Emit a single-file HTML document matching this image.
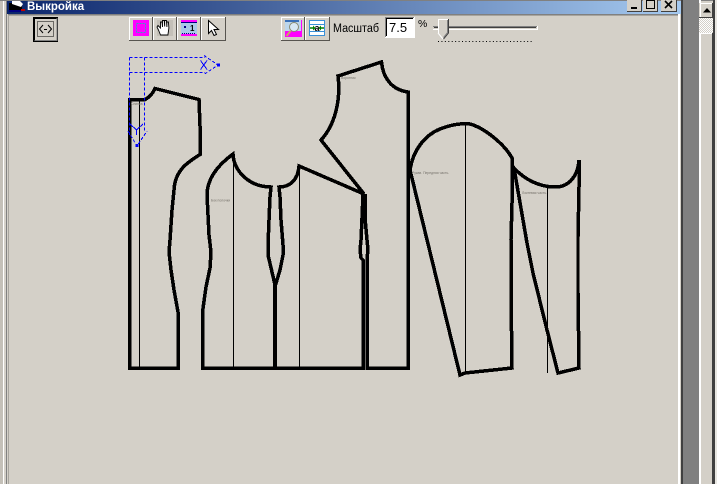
<!DOCTYPE html>
<html><head><meta charset="utf-8">
<style>
html,body{margin:0;padding:0;background:#d4d0c8;}
body{width:717px;height:484px;overflow:hidden;position:relative;}
svg{position:absolute;left:0;top:0;}
text{font-family:"Liberation Sans",sans-serif;}
.p{fill:none;stroke:#000;stroke-width:3.5;stroke-linejoin:miter;}
.t{fill:none;stroke:#000;stroke-width:1;}
.b{fill:none;stroke:#0000ff;stroke-width:1;stroke-dasharray:3 2;}
.s{font-size:3.4px;fill:#77736c;}
</style></head>
<body>
<svg width="717" height="484" viewBox="0 0 717 484" xmlns="http://www.w3.org/2000/svg">
<defs>
<linearGradient id="g" x1="0" x2="1" y1="0" y2="0"><stop offset="0" stop-color="#0a246a"/><stop offset="1" stop-color="#a6caf0"/></linearGradient>
<pattern id="d" width="2" height="2" patternUnits="userSpaceOnUse"><rect width="2" height="2" fill="#fff"/><rect width="1" height="1" fill="#d4d0c8"/><rect x="1" y="1" width="1" height="1" fill="#d4d0c8"/></pattern>
</defs>
<rect width="717" height="484" fill="#d4d0c8"/>
<!-- frame -->
<rect x="0" y="0" width="717" height="1" fill="#808080"/>
<rect x="0" y="1" width="3" height="483" fill="#c4c0b8"/>
<rect x="3" y="1" width="1" height="483" fill="#fff"/>
<rect x="6" y="1" width="1" height="483" fill="#808080"/>
<rect x="7" y="1" width="674" height="13" fill="url(#g)"/>
<rect x="8" y="14" width="670" height="1" fill="#808080"/>
<rect x="8" y="15" width="670" height="1" fill="#a8a59e"/>
<rect x="8" y="15" width="1" height="469" fill="#a8a59e"/>
<rect x="678" y="14" width="2" height="470" fill="#fff"/>
<rect x="681" y="0" width="2" height="484" fill="#404040"/>
<rect x="683" y="0" width="16" height="484" fill="#808080"/>
<rect x="699" y="0" width="2" height="484" fill="#fff"/>
<rect x="713" y="0" width="2" height="484" fill="#404040"/>
<rect x="715" y="0" width="2" height="484" fill="#e8e6e1"/>
<!-- scrollbar -->
<rect x="699" y="3" width="14" height="15" fill="#d4d0c8"/>
<path d="M699 17.5H712.5V3" fill="none" stroke="#404040"/>
<path d="M700.5 17V3.5H712" fill="none" stroke="#fff"/>
<path d="M703 12.5h8l-4-4.5z" fill="#000"/>
<rect x="699" y="18" width="14" height="15" fill="url(#d)"/>
<rect x="701" y="34" width="12" height="450" fill="#d4d0c8"/>
<rect x="700" y="33" width="12" height="1" fill="#fff"/>
<rect x="712" y="33" width="1" height="451" fill="#404040"/>
<!-- title -->
<g>
<path d="M9 3h10l3 3v4l-3 1H9z" fill="#000"/>
<path d="M12 1h8l3 3-2 3-9-3z" fill="#fff"/>
<rect x="21" y="9" width="4" height="2" fill="#c00000"/>
<rect x="9" y="10" width="12" height="2" fill="#000080"/>
<text x="27" y="10" font-size="11.500" font-weight="bold" fill="#fff">Выкройка</text>
</g>
<g>
<rect x="627" y="0" width="15" height="12" fill="#d4d0c8"/><path d="M627 11.500H641.500V0" fill="none" stroke="#404040"/>
<rect x="631" y="7" width="6" height="2" fill="#000"/>
<rect x="643" y="0" width="15" height="12" fill="#d4d0c8"/><path d="M643 11.500H657.500V0" fill="none" stroke="#404040"/>
<rect x="646.500" y="0.500" width="8" height="8" fill="none" stroke="#000"/>
<rect x="661" y="0" width="16" height="12" fill="#d4d0c8"/><path d="M661 11.500H676.500V0" fill="none" stroke="#404040"/>
<path d="M665 1l7 7M672 1l-7 7" stroke="#000" stroke-width="1.600"/>
</g>
<!-- pressed button -->
<rect x="33.500" y="17.500" width="24" height="24" fill="#d4d0c8" stroke="#000"/>
<path d="M34.500 41V18.500H57" fill="none" stroke="#000" stroke-width="1"/>
<path d="M34.500 40.500H57V18" fill="none" stroke="#808080"/>
<rect x="37.500" y="21.500" width="16" height="15" fill="none" stroke="#000" stroke-dasharray="1 1"/>
<path d="M43 25l-3.500 4 3.500 4M48 25l3.500 4-3.500 4" fill="none" stroke="#000"/>
<rect x="44" y="29" width="3" height="1" fill="#000"/>
<!-- toolbar 1 -->
<g id="btns" fill="#d4d0c8">
<rect x="129" y="17" width="24" height="24"/><rect x="153" y="17" width="24" height="24"/><rect x="177" y="17" width="24" height="24"/><rect x="201" y="17" width="25" height="24"/>
<rect x="281" y="17" width="24" height="24"/><rect x="305" y="17" width="25" height="24"/>
</g>
<g fill="none">
<path d="M129 40.500H152.500V17M153 40.500H176.500V17M177 40.500H200.500V17M201 40.500H225.500V17M281 40.500H304.500V17M305 40.500H329.500V17" stroke="#57544f"/>
<path d="M129.500 40V17.500H152M153.500 40V17.500H176M177.500 40V17.500H200M201.500 40V17.500H225M281.500 40V17.500H304M305.500 40V17.500H329" stroke="#fff"/>
</g>
<rect x="133" y="20" width="16" height="16" fill="#ff00ff"/>
<rect x="136.500" y="23.500" width="9" height="9" fill="none" stroke="#3aa0c0" stroke-dasharray="2 1"/>
<!-- hand -->
<rect x="157" y="20" width="16" height="16" fill="#c4c0b8"/>
<path d="M160.500 35l-2-5-1.500-3 1-1.500 2.500 2.500v-6h1.500l.5 5v-6.500h1.700l.5 6v-6h1.700l.5 6.500v-5h1.500l.5 6-1 7z" fill="#fff" stroke="#000" stroke-width=".9"/>
<!-- ruler -->
<rect x="181" y="20" width="16" height="16" fill="#a9c8e8"/>
<rect x="181" y="20" width="16" height="2" fill="#ff00ff"/><rect x="181" y="22" width="16" height="1" fill="#000080"/>
<rect x="181" y="34" width="16" height="2" fill="#ff00ff"/>
<path d="M182 33.500h14" stroke="#000080" stroke-dasharray="1 1"/>
<rect x="184" y="26" width="2" height="2" fill="#000080"/>
<text x="190" y="31" font-size="8" font-weight="bold" fill="#000">1</text>
<!-- arrow -->
<path d="M208.500 20.500v13l3-3 2.500 5 2.500-1-2.500-5h4.500z" fill="#fff" stroke="#000"/>
<!-- zoom icon -->
<rect x="285" y="20" width="17" height="17" fill="#ff00ff"/>
<rect x="285" y="20" width="16" height="11" fill="#bcd6ec"/>
<rect x="285" y="20" width="14" height="2" fill="#3a70b8"/>
<circle cx="294" cy="27" r="4.500" fill="#d8e8f4" stroke="#8a8a70"/>
<path d="M290.500 31l-4 5" stroke="#c8a860" stroke-width="2"/>
<!-- table icon -->
<rect x="309" y="20" width="16" height="16" fill="#fff"/>
<path d="M309.500 20.500h15v15h-15zM309 24.500h16M309 31.500h16" fill="none" stroke="#3a90d8"/>
<path d="M310 28h3M321 28h3" stroke="#008000" stroke-width="1.500"/>
<path d="M313 25.500l2.500 2.500-2.500 2.500zM321 25.500l-2.500 2.500 2.500 2.500z" fill="#008000"/>
<text x="317" y="31" font-size="9" text-anchor="middle" fill="#000" font-weight="bold">a</text>
<!-- labels -->
<text x="333" y="32" font-size="11.500" textLength="46" lengthAdjust="spacingAndGlyphs" fill="#000">Масштаб</text>
<rect x="385.500" y="17.500" width="29" height="20" fill="#fff" stroke="#fff"/>
<path d="M385.500 37V17.500H414" fill="none" stroke="#808080"/>
<path d="M386.500 36V18.500H413" fill="none" stroke="#000"/>
<text x="389" y="32" font-size="13" fill="#000">7.5</text>
<text x="418" y="27" font-size="10.500" fill="#000">%</text>
<!-- slider -->
<rect x="433" y="26" width="104" height="1" fill="#808080"/>
<rect x="434" y="27" width="102" height="1" fill="#404040"/>
<rect x="433" y="29" width="105" height="1" fill="#fff"/>
<rect x="537" y="26" width="1" height="4" fill="#fff"/>
<path d="M438 19h10v14l-5 6-5-6z" fill="#d4d0c8"/>
<path d="M438.500 33V19.500H448" fill="none" stroke="#fff"/>
<path d="M448.500 19v14l-5 6" fill="none" stroke="#404040"/>
<path d="M447.500 20v12.500l-4 5" fill="none" stroke="#808080"/>
<path d="M438 33l5 6" stroke="#fff" fill="none"/>
<path d="M438 41.500H534" stroke="#000" stroke-dasharray="1 2.430" fill="none"/>
<!-- pattern pieces -->
<g shape-rendering="crispEdges">
<path class="t" d="M139.500 99V368M233.500 155V368M299.500 167V368M465.500 123V373M547.500 187V373"/>
<path class="p" d="M129.500 368V99.500H145C150 97 153 93 155 88.500L199 99.500 200 126V154.500C188 162 175 170 174 190L172 210 170 240 169 252 171 270 174 290 178 312V368Z"/>
<path class="p" d="M275.500 368H202.500V312L206 287 210 268 211 252 209 235 208 215 207 195C207 178 218 165 233 154C234 172 250 187 271 187L270 197 269 220 268 245 268 255 272 272 275 285"/>
<path class="p" d="M275.500 285L280 270 283 255 283 245 281 220 280 197 279 187C290 187 298 180 299 166L364 194"/>
<path d="M275 284V368" stroke="#000" stroke-width="4" fill="none"/>
<path class="p" d="M275 368H363V260L361 258 360 250 361 240 362 218 363 194"/>
<path class="p" d="M365 194V218L367 240 368 250 367 258 367 260V368H408V92C392 90 383 78 381.500 62L338 76C341 100 335 125 321 140L364 194"/>
<path d="M364.500 194V218" stroke="#000" stroke-width="5" fill="none"/>
<path class="p" d="M410 170C413 150 425 135 440 129C450 125 460 123 470 124C485 128 505 145 512 158L512 203 511 240 511 293 512 368 465 373 460 375Z"/>
<path class="p" d="M514 168C525 180 540 187 555 187C570 187 578 175 579 160L579 187 578 237 578 293 579 368 558 373 547 330 533 273 527 243Z"/>
</g>
<!-- small text -->
<text class="s" x="131" y="105">Спинка</text>
<text class="s" x="211" y="201.500">Бок полочки</text>
<text class="s" x="341" y="79">Воротник</text>
<text class="s" x="412" y="174">Рукав. Передняя часть.</text>
<text class="s" x="522" y="194">Локтевая часть.</text>
<!-- blue -->
<g shape-rendering="crispEdges">
<path class="b" d="M129.500 57.500H205M129.500 72.500H205M129.500 57.500V135M144.500 57.500V132"/>
<path class="b" d="M204 55.500L218 65 204 74.500M128 131L137 146 147 131"/>
<path d="M200.500 60.500L207 69.500M207 60.500L200.500 69.500M130 124L136.500 130 143 124M136.500 130V135" fill="none" stroke="#0000ff"/>
</g>
<rect x="217" y="63.500" width="3" height="3" fill="#0000ff"/>
<rect x="135.500" y="144" width="3" height="3" fill="#0000ff"/>
</svg>
</body></html>
